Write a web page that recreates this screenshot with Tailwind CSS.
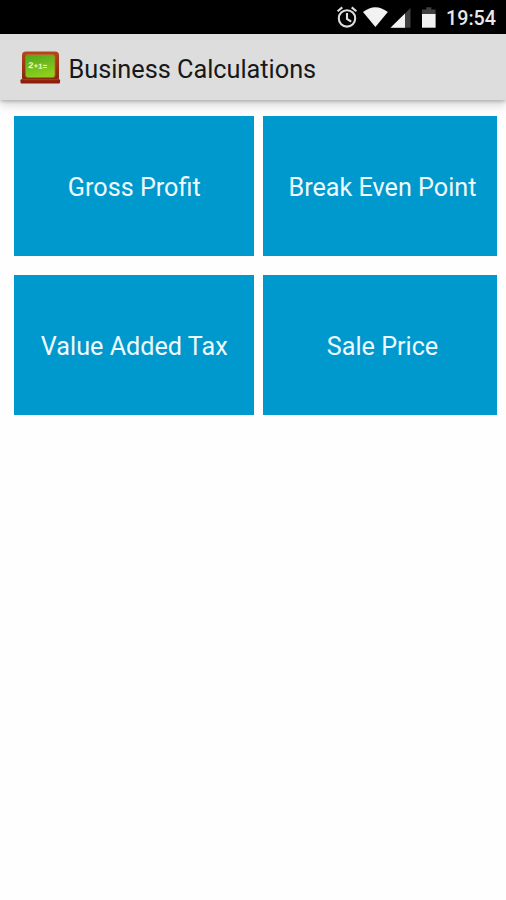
<!DOCTYPE html>
<html lang="en">
<head>
<meta charset="utf-8">
<title>Business Calculations</title>
<script src="https://cdn.jsdelivr.net/npm/@tailwindcss/browser@4"></script>
</head>
<body class="h-[900px] w-[506px] overflow-hidden bg-[#fefefe] font-['Roboto',sans-serif]">
<div class="flex h-[34px] items-center justify-end bg-black pr-[10px] text-white">
  <svg class="h-[34px] w-[108px] shrink-0" viewBox="0 0 108 34">
    <g fill="none" stroke="#dedede" stroke-width="2.1">
      <circle cx="16" cy="18.400" r="8.200"/>
      <path d="M16 13v6l4.200 2.700M6.600 11.300l4.700-3.900M25.400 11.300l-4.700-3.900"/>
    </g>
    <path d="M44.400 27 32 12Q44.400 2.500 56.800 12Z" fill="#f2f2f2"/>
    <path d="M79.500 8v19.700H59.500Z" fill="#404040"/>
    <path d="M74 13.400v14.300H59.500Z" fill="#f2f2f2"/>
    <path d="M91 14V9.500h4.300v-2.300h5v2.300h4.300v4.500Z" fill="#404040"/>
    <path d="M91 14h13.600v13.700H91Z" fill="#f2f2f2"/>
  </svg>
  <span class="ml-[5px] w-[52px] pt-[4px] text-right text-[19.700px] leading-[34px] font-medium whitespace-nowrap text-[#e8e8e8]">19:54</span>
</div>
<header class="relative flex h-[66px] items-center bg-[#dddddd] pl-[20px] shadow-[0_1px_4px_rgba(0,0,0,0.28),0_6px_9px_rgba(0,0,0,0.13)]">
  <svg class="h-[36px] w-[41px] shrink-0" viewBox="0 0 41 36">
    <defs>
      <linearGradient id="screen" x1="0" y1="0" x2="0.3" y2="1"><stop offset="0" stop-color="#4fa51d"/><stop offset="1" stop-color="#8ccf1c"/></linearGradient>
      <linearGradient id="frame" x1="0" y1="0" x2="0" y2="1"><stop offset="0" stop-color="#b3481a"/><stop offset="1" stop-color="#84260d"/></linearGradient>
    </defs>
    <rect x="2" y="2.500" width="37" height="30" rx="4" fill="url(#frame)"/>
    <rect x="5.500" y="5.500" width="29.500" height="23" rx="2.500" fill="url(#screen)" stroke="#c8622a" stroke-width="0.800"/>
    <rect x="0.500" y="30.300" width="39.500" height="4.200" rx="1" fill="#8c1f0b"/>
    <path d="M3 30.700h35" stroke="#b84b22" stroke-width="0.800"/>
    <text x="8" y="19" font-family="Liberation Mono, monospace" font-weight="700" font-size="9" fill="#e9fbd8" transform="rotate(3 8 19)">2<tspan font-size="7.500">+1</tspan><tspan font-size="7.500">=</tspan></text>
  </svg>
  <h1 class="ml-[7.500px] pt-[5px] text-[25.300px] leading-[30px] tracking-[-0.020px] whitespace-nowrap text-[#181818]">Business Calculations</h1>
</header>
<main class="grid grid-cols-[239.500px_234px] grid-rows-[140px_140px] gap-x-[9.500px] gap-y-[19px] pt-[16px] pl-[14px] text-[25.200px] whitespace-nowrap text-[#eefaff]">
  <button class="relative bg-[#0099cd] pt-[4px] pl-[1px]">Gross Profit</button>
  <button class="relative bg-[#0099cd] pt-[4px] pl-[5px]">Break Even Point</button>
  <button class="relative bg-[#0099cd] pt-[4px] pl-[1px]">Value Added Tax</button>
  <button class="relative bg-[#0099cd] pt-[4px] pl-[5px]">Sale Price</button>
</main>
</body>
</html>
